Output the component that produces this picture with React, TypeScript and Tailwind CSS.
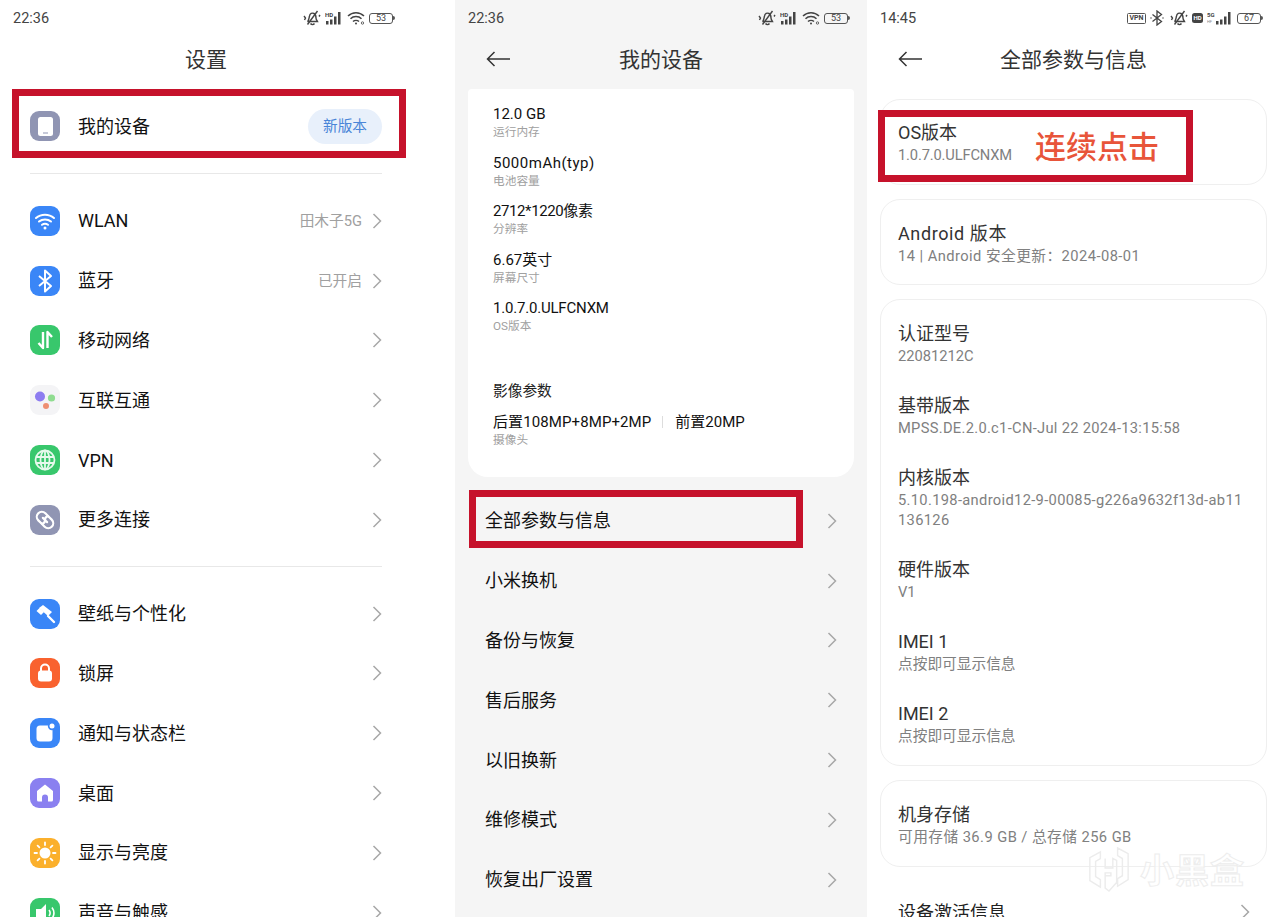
import type { ReactNode } from 'react';

const FONT = "font-['Roboto','Noto_Sans_CJK_SC',sans-serif]";

function Chevron() {
  return (
    <svg width="10" height="16" viewBox="0 0 10 16" fill="none" className="shrink-0">
      <path d="M1.500 1l7 7-7 7" stroke="#a8a8a8" strokeWidth="1.500" />
    </svg>
  );
}

function BackArrow() {
  return (
    <svg width="24" height="16" viewBox="0 0 24 16" fill="none">
      <path d="M24 8H1.500M8.500 1L1.500 8l7 7" stroke="#333" strokeWidth="1.500" />
    </svg>
  );
}

function MutedBell() {
  return (
    <svg width="18" height="16" viewBox="0 0 18 16" fill="none" stroke="#444" strokeWidth="1.400">
      <path d="M5 11c1-1.500 1-3 1.500-5C7 3.500 9 2.500 11 3.500c2 1 2 3 2 4.500 0 1.500 1 2.500 1.500 3.500H5z" />
      <path d="M7.500 13.500c1 1.500 3 1.500 4 0M14.500 1L4.500 14.500M1 6l1.500 2-1 2M17 5l-1 1.500" />
    </svg>
  );
}

function Signal({ tag, sub }: { tag: string; sub?: string }) {
  return (
    <svg width={sub ? 26 : 18} height="14" viewBox={sub ? '0 0 26 14' : '0 0 18 14'}>
      <text x="0" y="5.500" fontSize="6" fontWeight="700" fill="#444" fontFamily="Roboto, sans-serif">
        {tag}
      </text>
      {sub && (
        <text x="0" y="12" fontSize="4" fill="#888" fontFamily="Roboto, sans-serif">
          {sub}
        </text>
      )}
      <g fill="#444" transform={sub ? 'translate(8 0)' : undefined}>
        <rect x="1" y="10" width="2.500" height="3.500" />
        <rect x="5" y="8.500" width="2.500" height="5" />
        <rect x="9" y="5.500" width="2.500" height="8" />
        <rect x="13" y="1" width="2.500" height="12.500" />
      </g>
    </svg>
  );
}

function StatusWifi() {
  return (
    <svg width="18" height="14" viewBox="0 0 18 14" fill="none" stroke="#444" strokeWidth="1.500">
      <path d="M1 5c4.500-4.500 11.500-4.500 16 0M3.500 7.800c3-3 8-3 11 0M6 10.500c1.600-1.500 4.400-1.500 6 0" />
      <circle cx="9" cy="12.500" r="1" fill="#444" stroke="none" />
      <circle cx="15.500" cy="12" r="1.200" stroke="#444" strokeWidth="0.800" />
    </svg>
  );
}

function Battery({ level }: { level: string }) {
  return (
    <div className="flex items-center">
      <div className="flex h-[11px] w-[24px] items-center justify-center rounded-[3px] border border-[#555] text-[9px] leading-none text-[#444]">
        {level}
      </div>
      <div className="h-[4px] w-[2px] rounded-r-sm bg-[#555]" />
    </div>
  );
}

function StatusBar({ time, children }: { time: string; children: ReactNode }) {
  return (
    <div className="flex h-9 items-center justify-between pl-[13px] pr-[17px]">
      <span className="pt-[2px] text-[14.500px] text-[#444]">{time}</span>
      <div className="flex items-center gap-[4px]">{children}</div>
    </div>
  );
}

function IconBox({ bg, children }: { bg: string; children: ReactNode }) {
  return (
    <div className={`flex h-[30px] w-[30px] shrink-0 items-center justify-center overflow-hidden rounded-[9px] ${bg}`}>
      <svg width="30" height="30" viewBox="0 0 30 30" fill="none">
        {children}
      </svg>
    </div>
  );
}

const icons = {
  device: (
    <IconBox bg="bg-[#9095b3]">
      <rect x="8" y="6" width="15" height="19" rx="2.500" fill="#fff" />
      <rect x="13" y="21.500" width="5" height="1" fill="#9095b3" />
    </IconBox>
  ),
  wifi: (
    <IconBox bg="bg-[#3a86f7]">
      <g stroke="#fff" strokeWidth="2" strokeLinecap="round">
        <path d="M6 12c5-4.500 13-4.500 18 0M9 15.500c3.300-2.800 8.700-2.800 12 0M12 18.800c1.800-1.300 4.200-1.300 6 0" />
      </g>
      <circle cx="15" cy="22" r="1.500" fill="#fff" />
    </IconBox>
  ),
  bluetooth: (
    <IconBox bg="bg-[#3a86f7]">
      <path d="M9 10l12 10-6 5.500v-21l6 5.500-12 10" stroke="#fff" strokeWidth="2" strokeLinejoin="round" />
    </IconBox>
  ),
  mobile: (
    <IconBox bg="bg-[#38c76c]">
      <path d="M13 7v16l-4.500-5M17.500 23V7l4.500 5" stroke="#fff" strokeWidth="2.400" strokeLinejoin="round" />
    </IconBox>
  ),
  connect: (
    <IconBox bg="bg-[#f4f4f6]">
      <circle cx="10" cy="11.500" r="5" fill="#8d7cf0" />
      <circle cx="21.500" cy="13" r="3.600" fill="#8fdc90" />
      <circle cx="16" cy="21" r="3" fill="#ee8f72" />
    </IconBox>
  ),
  vpn: (
    <IconBox bg="bg-[#38c76c]">
      <g stroke="#e6f9ec" strokeWidth="1.800">
        <circle cx="15" cy="15" r="9.500" />
        <ellipse cx="15" cy="15" rx="4.500" ry="9.500" />
        <path d="M15 5.500v19M6 12h18M6 18h18" />
      </g>
    </IconBox>
  ),
  more: (
    <IconBox bg="bg-[#9095b3]">
      <g stroke="#fff" strokeWidth="2.200" strokeLinecap="round" transform="rotate(45 15 15)">
        <path d="M15 10H10.500a5 5 0 0 0 0 10H14c3 0 3-5 0-5h-2" />
        <path d="M15 20h4.500a5 5 0 0 0 0-10H16c-3 0-3 5 0 5h2" />
      </g>
    </IconBox>
  ),
  wallpaper: (
    <IconBox bg="bg-[#3a86f7]">
      <path d="M13 6l9 7-4 4-9-8z" fill="#fff" />
      <path d="M9.500 9L6.500 12l4.500 4 3-3z" fill="#fff" />
      <path d="M18 17l6 6" stroke="#fff" strokeWidth="2.400" strokeLinecap="round" />
    </IconBox>
  ),
  lock: (
    <IconBox bg="bg-[#f9622f]">
      <path d="M11 13v-2.500a4 4 0 0 1 8 0V13" stroke="#fff" strokeWidth="2" />
      <rect x="8" y="12.500" width="14" height="11" rx="3" fill="#fff" />
    </IconBox>
  ),
  notice: (
    <IconBox bg="bg-[#3a86f7]">
      <rect x="6.500" y="7.500" width="16" height="16" rx="3.500" fill="#fff" />
      <circle cx="22" cy="8" r="4.200" fill="#3a86f7" />
      <circle cx="22" cy="8" r="2.500" fill="#fff" />
    </IconBox>
  ),
  desktop: (
    <IconBox bg="bg-[#8a80f0]">
      <path d="M15 6.500l-8 6.500v9a1.500 1.500 0 0 0 1.500 1.500H12v-4a3 3 0 0 1 6 0v4h3.500A1.500 1.500 0 0 0 23 22v-9z" fill="#fff" />
    </IconBox>
  ),
  display: (
    <IconBox bg="bg-[#fbb02c]">
      <circle cx="15" cy="15" r="5.500" fill="#fff" />
      <path d="M15 4.500v2.500M15 23v2.500M4.500 15H7M23 15h2.500M7.600 7.600l1.800 1.800M20.600 20.600l1.800 1.800M7.600 22.400l1.800-1.800M20.600 9.400l1.800-1.800" stroke="#fff" strokeWidth="1.800" strokeLinecap="round" />
    </IconBox>
  ),
  sound: (
    <IconBox bg="bg-[#38c76c]">
      <path d="M6 11h5l5-5v18l-5-5H6z" fill="#fff" />
      <path d="M19 12c1.500 2 1.500 4 0 6M22 9.500c2.500 3.500 2.500 7.500 0 11" stroke="#fff" strokeWidth="1.600" />
    </IconBox>
  ),
};

function SettingRow({ icon, label, value }: { icon: ReactNode; label: string; value?: string }) {
  return (
    <div className="flex h-[59.8px] items-center">
      {icon}
      <span className="ml-[18px] flex-1 text-[18px] text-[#111]">{label}</span>
      {value && <span className="mr-[10px] text-[14.700px] text-[#a0a0a0]">{value}</span>}
      <Chevron />
    </div>
  );
}

function RedBox({ className }: { className: string }) {
  return <div className={`absolute border-[7px] border-[#c6122b] ${className}`} />;
}

const connectRows = [
  { icon: icons.wifi, label: 'WLAN', value: '田木子5G' },
  { icon: icons.bluetooth, label: '蓝牙', value: '已开启' },
  { icon: icons.mobile, label: '移动网络' },
  { icon: icons.connect, label: '互联互通' },
  { icon: icons.vpn, label: 'VPN' },
  { icon: icons.more, label: '更多连接' },
];

const personalRows = [
  { icon: icons.wallpaper, label: '壁纸与个性化' },
  { icon: icons.lock, label: '锁屏' },
  { icon: icons.notice, label: '通知与状态栏' },
  { icon: icons.desktop, label: '桌面' },
  { icon: icons.display, label: '显示与亮度' },
  { icon: icons.sound, label: '声音与触感' },
];

const specs = [
  { value: '12.0 GB', label: '运行内存', spacing: '' },
  { value: '5000mAh(typ)', label: '电池容量', spacing: 'tracking-[0.5px]' },
  { value: '2712*1220像素', label: '分辨率', spacing: 'tracking-[-0.4px]' },
  { value: '6.67英寸', label: '屏幕尺寸', spacing: '' },
  { value: '1.0.7.0.ULFCNXM', label: 'OS版本', spacing: 'tracking-[-0.2px]' },
];

const deviceMenu = ['全部参数与信息', '小米换机', '备份与恢复', '售后服务', '以旧换新', '维修模式', '恢复出厂设置'];

const identityInfo = [
  { title: '认证型号', lines: ['22081212C'] },
  { title: '基带版本', lines: ['MPSS.DE.2.0.c1-CN-Jul 22 2024-13:15:58'], spacing: 'tracking-[0.3px]' },
  { title: '内核版本', lines: ['5.10.198-android12-9-00085-g226a9632f13d-ab11', '136126'], spacing: 'tracking-[0.33px]' },
  { title: '硬件版本', lines: ['V1'] },
  { title: 'IMEI 1', lines: ['点按即可显示信息'] },
  { title: 'IMEI 2', lines: ['点按即可显示信息'] },
];

function InfoItem({
  title,
  lines,
  spacing = '',
  titleSpacing = '',
}: {
  title: string;
  lines: string[];
  spacing?: string;
  titleSpacing?: string;
}) {
  return (
    <div>
      <p className={`text-[18px] leading-[24px] text-[#333] ${titleSpacing}`}>{title}</p>
      {lines.map((line) => (
        <p key={line} className={`whitespace-nowrap text-[14.700px] leading-[20px] text-[#808080] ${spacing}`}>
          {line}
        </p>
      ))}
    </div>
  );
}

function InfoCard({ className, children }: { className?: string; children: ReactNode }) {
  return <div className={`rounded-[20px] border border-[#efefef] bg-white px-[17px] ${className ?? ''}`}>{children}</div>;
}

export default function App() {
  return (
    <div className={`flex h-[917px] w-[1280px] overflow-hidden bg-white ${FONT}`}>
      {/* 设置 */}
      <section className="relative w-[455px] shrink-0 bg-white">
        <div className="w-[412px]">
          <StatusBar time="22:36">
            <MutedBell />
            <Signal tag="HD" />
            <StatusWifi />
            <Battery level="53" />
          </StatusBar>
          <h1 className="flex h-[46px] items-center justify-center pt-[3px] text-[21px] font-normal text-[#333]">设置</h1>
          <div className="px-[30px] pt-[14px]">
            <div className="flex h-[60px] items-center">
              {icons.device}
              <span className="ml-[18px] flex-1 text-[18px] text-[#111]">我的设备</span>
              <span className="flex h-[35px] w-[74px] items-center justify-center rounded-full bg-[#e8f0fb] text-[14.700px] text-[#4a86d8]">
                新版本
              </span>
            </div>
            <div className="mt-[17px] h-px bg-[#e8e8e8]" />
            <div className="mt-[17px]">
              {connectRows.map((row) => (
                <SettingRow key={row.label} {...row} />
              ))}
            </div>
            <div className="mt-[16px] h-px bg-[#e8e8e8]" />
            <div className="mt-[17px]">
              {personalRows.map((row) => (
                <SettingRow key={row.label} {...row} />
              ))}
            </div>
          </div>
        </div>
        <RedBox className="left-[12px] top-[89px] h-[69px] w-[394px]" />
      </section>

      {/* 我的设备 */}
      <section className="relative w-[412px] shrink-0 bg-[#f5f5f5]">
        <StatusBar time="22:36">
          <MutedBell />
          <Signal tag="HD" />
          <StatusWifi />
          <Battery level="53" />
        </StatusBar>
        <div className="relative flex h-[46px] items-center justify-center">
          <div className="absolute left-[31px] top-[15px]">
            <BackArrow />
          </div>
          <h1 className="pt-[3px] text-[21px] font-normal text-[#333]">我的设备</h1>
        </div>
        <div className="mx-[13px] mt-[7px] h-[388px] rounded-t-[4px] rounded-b-[20px] bg-white pl-[25px] pt-[14px]">
          <div className="flex flex-col gap-[12.500px]">
            {specs.map((spec) => (
              <div key={spec.label}>
                <p className={`text-[15px] leading-[22px] text-[#111] ${spec.spacing}`}>{spec.value}</p>
                <p className="text-[11.700px] leading-[14px] text-[#a0a0a0]">{spec.label}</p>
              </div>
            ))}
          </div>
          <p className="mt-[47px] text-[14.700px] leading-[22px] text-[#222]">影像参数</p>
          <div className="mt-[9px] flex h-[22px] items-center text-[15px] text-[#111]">
            <span className="tracking-[0.1px]">后置108MP+8MP+2MP</span>
            <span className="ml-[11px] mr-[12px] h-[12px] w-px bg-[#dddddd]" />
            <span>前置20MP</span>
          </div>
          <p className="text-[11.700px] leading-[14px] text-[#a0a0a0]">摄像头</p>
        </div>
        <div className="mt-[14px] pl-[30px] pr-[30px]">
          {deviceMenu.map((item) => (
            <div key={item} className="flex h-[59.8px] items-center justify-between">
              <span className="text-[18px] text-[#111]">{item}</span>
              <Chevron />
            </div>
          ))}
        </div>
        <RedBox className="left-[14px] top-[490px] h-[58px] w-[334px]" />
      </section>

      {/* 全部参数与信息 */}
      <section className="relative flex-1 bg-white">
        <StatusBar time="14:45">
          <div className="flex h-[11px] w-[19px] items-center justify-center rounded-[1.500px] border border-[#555] text-[7px] font-bold leading-none text-[#444]">
            VPN
          </div>
          <svg width="14" height="16" viewBox="0 0 14 16" fill="none" stroke="#444" strokeWidth="1.300" className="mr-[2px]">
            <path d="M2.500 4.500l9 7L7 15V1l4.500 3.500-9 7" />
            <path d="M0.500 8h1M12.500 8h1" />
          </svg>
          <MutedBell />
          <div className="flex h-[10px] w-[11px] items-center justify-center rounded-[2.500px] bg-[#444] text-[6px] font-bold leading-none text-white">
            HD
          </div>
          <Signal tag="5G" sub="HF" />
          <Battery level="67" />
        </StatusBar>
        <div className="relative flex h-[46px] items-center justify-center">
          <div className="absolute left-[31px] top-[15px]">
            <BackArrow />
          </div>
          <h1 className="pt-[3px] text-[21px] font-normal text-[#333]">全部参数与信息</h1>
        </div>
        <div className="ml-[13px] mr-[13px] mt-[17px] flex flex-col gap-[14px]">
          <InfoCard className="h-[86px] pt-[21px]">
            <InfoItem title="OS版本" lines={['1.0.7.0.ULFCNXM']} spacing="tracking-[-0.15px]" />
          </InfoCard>
          <InfoCard className="h-[86px] pt-[22px]">
            <InfoItem
              title="Android 版本"
              titleSpacing="tracking-[0.6px]"
              lines={['14 | Android 安全更新：2024-08-01']}
              spacing="tracking-[0.45px]"
            />
          </InfoCard>
          <InfoCard className="flex h-[467px] flex-col gap-[28px] pt-[22px]">
            {identityInfo.map((info) => (
              <InfoItem key={info.title} {...info} />
            ))}
          </InfoCard>
          <InfoCard className="h-[87px] pt-[22px]">
            <InfoItem title="机身存储" lines={['可用存储 36.9 GB / 总存储 256 GB']} spacing="tracking-[0.45px]" />
          </InfoCard>
        </div>
        <div className="mt-[15px] flex h-[60px] items-center justify-between pl-[31px] pr-[30px]">
          <span className="text-[18px] text-[#222]">设备激活信息</span>
          <Chevron />
        </div>
        <RedBox className="left-[11px] top-[110px] h-[72px] w-[315px]" />
        <span className="absolute left-[168px] top-[126px] text-[31px] font-medium leading-[44px] text-[#e8553a]">连续点击</span>
        {/* 小黑盒 watermark */}
        <div className="absolute left-[220px] top-[844px] flex items-center">
          <svg width="44" height="52" viewBox="0 0 46 52" fill="none" stroke="#ececec" strokeWidth="1.500">
            <path d="M14 7L3 13v24l11 7v-8l-5-3V17l5-3zM32 3l11 6v27l-11 7v-8l5-3V14l-5-3zM19 14v10h8V14l4 2v23l-8 9-4-3V32h6v-3h-6v16" />
          </svg>
          <span className="ml-[9px] mt-[2px] text-[34px] font-bold leading-none tracking-[1px] text-white/60 [-webkit-text-stroke:1px_#ededed]">
            小黑盒
          </span>
        </div>
      </section>
    </div>
  );
}
